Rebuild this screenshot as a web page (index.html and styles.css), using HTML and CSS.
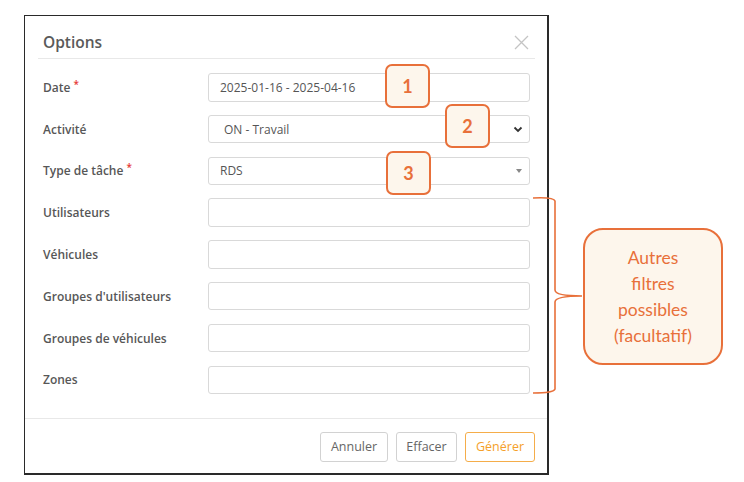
FILE: index.html
```html
<!DOCTYPE html>
<html lang="fr">
<head>
<meta charset="utf-8">
<title>Options</title>
<link rel="stylesheet" href="styles.css">
</head>
<body>
<div class="page">
  <div class="dialog">
    <div class="dlg-header">
      <h1 class="dlg-title">Options</h1>
      <span class="close" aria-label="Fermer">
        <svg width="15" height="15" viewBox="0 0 15 15"><path d="M1 1L14 14M14 1L1 14" stroke="#c4c4c4" stroke-width="1.3" fill="none"/></svg>
      </span>
    </div>
    <div class="dlg-body">
      <div class="row">
        <label class="lbl">Date<span class="req">*</span></label>
        <div class="field">2025-01-16 - 2025-04-16</div>
      </div>
      <div class="row">
        <label class="lbl">Activité</label>
        <div class="field field-select">
          <span class="sel-text">ON - Travail</span>
          <svg class="chev" width="10" height="7" viewBox="0 0 10 7"><path d="M1.5 1.5L5 5L8.5 1.5" stroke="#333" stroke-width="1.8" fill="none"/></svg>
        </div>
      </div>
      <div class="row">
        <label class="lbl">Type de tâche<span class="req">*</span></label>
        <div class="field field-select">
          <span>RDS</span>
          <span class="caret"></span>
        </div>
      </div>
      <div class="row">
        <label class="lbl">Utilisateurs</label>
        <div class="field"></div>
      </div>
      <div class="row">
        <label class="lbl">Véhicules</label>
        <div class="field"></div>
      </div>
      <div class="row">
        <label class="lbl">Groupes d'utilisateurs</label>
        <div class="field"></div>
      </div>
      <div class="row">
        <label class="lbl">Groupes de véhicules</label>
        <div class="field"></div>
      </div>
      <div class="row">
        <label class="lbl">Zones</label>
        <div class="field"></div>
      </div>
    </div>
    <div class="dlg-footer">
      <button class="btn btn-cancel">Annuler</button>
      <button class="btn btn-clear">Effacer</button>
      <button class="btn btn-primary">Générer</button>
    </div>
  </div>

  <div class="badge badge-1">1</div>
  <div class="badge badge-2">2</div>
  <div class="badge badge-3">3</div>

  <svg class="brace" width="60" height="200" viewBox="0 0 60 200">
    <path d="M1 1 Q22 0 23 4 L23 93 Q23 99 50 99 Q23 99 23 105 L23 192 Q22 196 1 196" stroke="#e8703a" stroke-width="1.6" fill="none"/>
  </svg>

  <div class="callout">Autres<br>filtres<br>possibles<br>(facultatif)</div>
</div>
</body>
</html>
```

FILE: styles.css
```css
* { box-sizing: border-box; }

html, body {
  margin: 0;
  padding: 0;
  background: #ffffff;
}

body {
  font-family: "Open Sans", "Liberation Sans", sans-serif;
  color: #555;
}

.page {
  position: relative;
  width: 744px;
  height: 482px;
  padding: 15px 0 0 24px;
}

.dialog {
  width: 525px;
  height: 460px;
  border: 1px solid #2a2a2a;
  border-right-width: 2px;
  border-bottom-width: 2px;
  background: #fff;
  display: flex;
  flex-direction: column;
}

.dlg-header {
  height: 43px;
  margin: 0 12px 0 13px;
  padding: 10px 0 0 5px;
  border-bottom: 1px solid #e8e8e8;
  display: flex;
  align-items: center;
  justify-content: space-between;
}

.dlg-title {
  margin: 0;
  font-size: 15.5px;
  font-weight: 600;
  color: #5a5a5a;
}

.close {
  display: flex;
  margin-right: 6px;
  margin-top: 1px;
}

.dlg-body {
  flex: 1;
  padding: 14px 16px 0 18px;
  display: flex;
  flex-direction: column;
  gap: 13.3px;
}

.row {
  display: grid;
  grid-template-columns: 165px 322px;
  align-items: center;
  height: 28.5px;
}

.lbl {
  font-size: 12px;
  font-weight: 600;
  color: #575757;
  white-space: nowrap;
}

.req {
  color: #e53935;
  font-size: 10px;
  position: relative;
  top: -4px;
  margin-left: 3px;
}

.field {
  height: 28.5px;
  border: 1px solid #d9d9d9;
  border-radius: 3px;
  background: #fff;
  font-size: 12px;
  color: #555;
  padding: 0 11px;
  display: flex;
  align-items: center;
}

.field-select {
  justify-content: space-between;
}

.sel-text {
  padding-left: 4px;
}

.chev {
  margin-right: -5px;
  margin-top: 1px;
}

.caret {
  width: 0;
  height: 0;
  border-left: 3.5px solid transparent;
  border-right: 3.5px solid transparent;
  border-top: 4px solid #888;
  margin-right: -4px;
}

.dlg-footer {
  height: 55px;
  border-top: 1px solid #e8e8e8;
  display: flex;
  justify-content: flex-end;
  align-items: flex-start;
  padding: 13px 12px 0 0;
  gap: 8px;
}

.btn {
  height: 29.5px;
  font-family: "Open Sans", "Liberation Sans", sans-serif;
  font-size: 12.5px;
  background: #fff;
  border: 1px solid #d2d2d2;
  border-radius: 3px;
  color: #666;
  padding: 0;
}

.btn-cancel { width: 68px; }
.btn-clear { width: 61px; }
.btn-primary {
  width: 70px;
  color: #f5a02a;
  border-color: #f5ad4a;
}

.badge {
  position: absolute;
  width: 45px;
  height: 44px;
  border: 2px solid #e8703a;
  border-radius: 7px;
  background: #fdf6ec;
  color: #e8703a;
  font-family: Lato, "Open Sans", sans-serif;
  font-weight: 700;
  font-size: 18px;
  display: flex;
  align-items: center;
  justify-content: center;
}

.badge-1 { left: 385px; top: 64px; }
.badge-2 { left: 445px; top: 104px; }
.badge-3 { left: 386px; top: 151px; }

.brace {
  position: absolute;
  left: 532px;
  top: 197px;
}

.callout {
  position: absolute;
  left: 583px;
  top: 228px;
  width: 140px;
  height: 137px;
  border: 2px solid #e8703a;
  border-radius: 20px;
  background: #fdf6ec;
  color: #e8703a;
  font-family: Lato, "Open Sans", sans-serif;
  font-size: 17.5px;
  line-height: 26px;
  text-align: center;
  display: flex;
  align-items: center;
  justify-content: center;
}
```
